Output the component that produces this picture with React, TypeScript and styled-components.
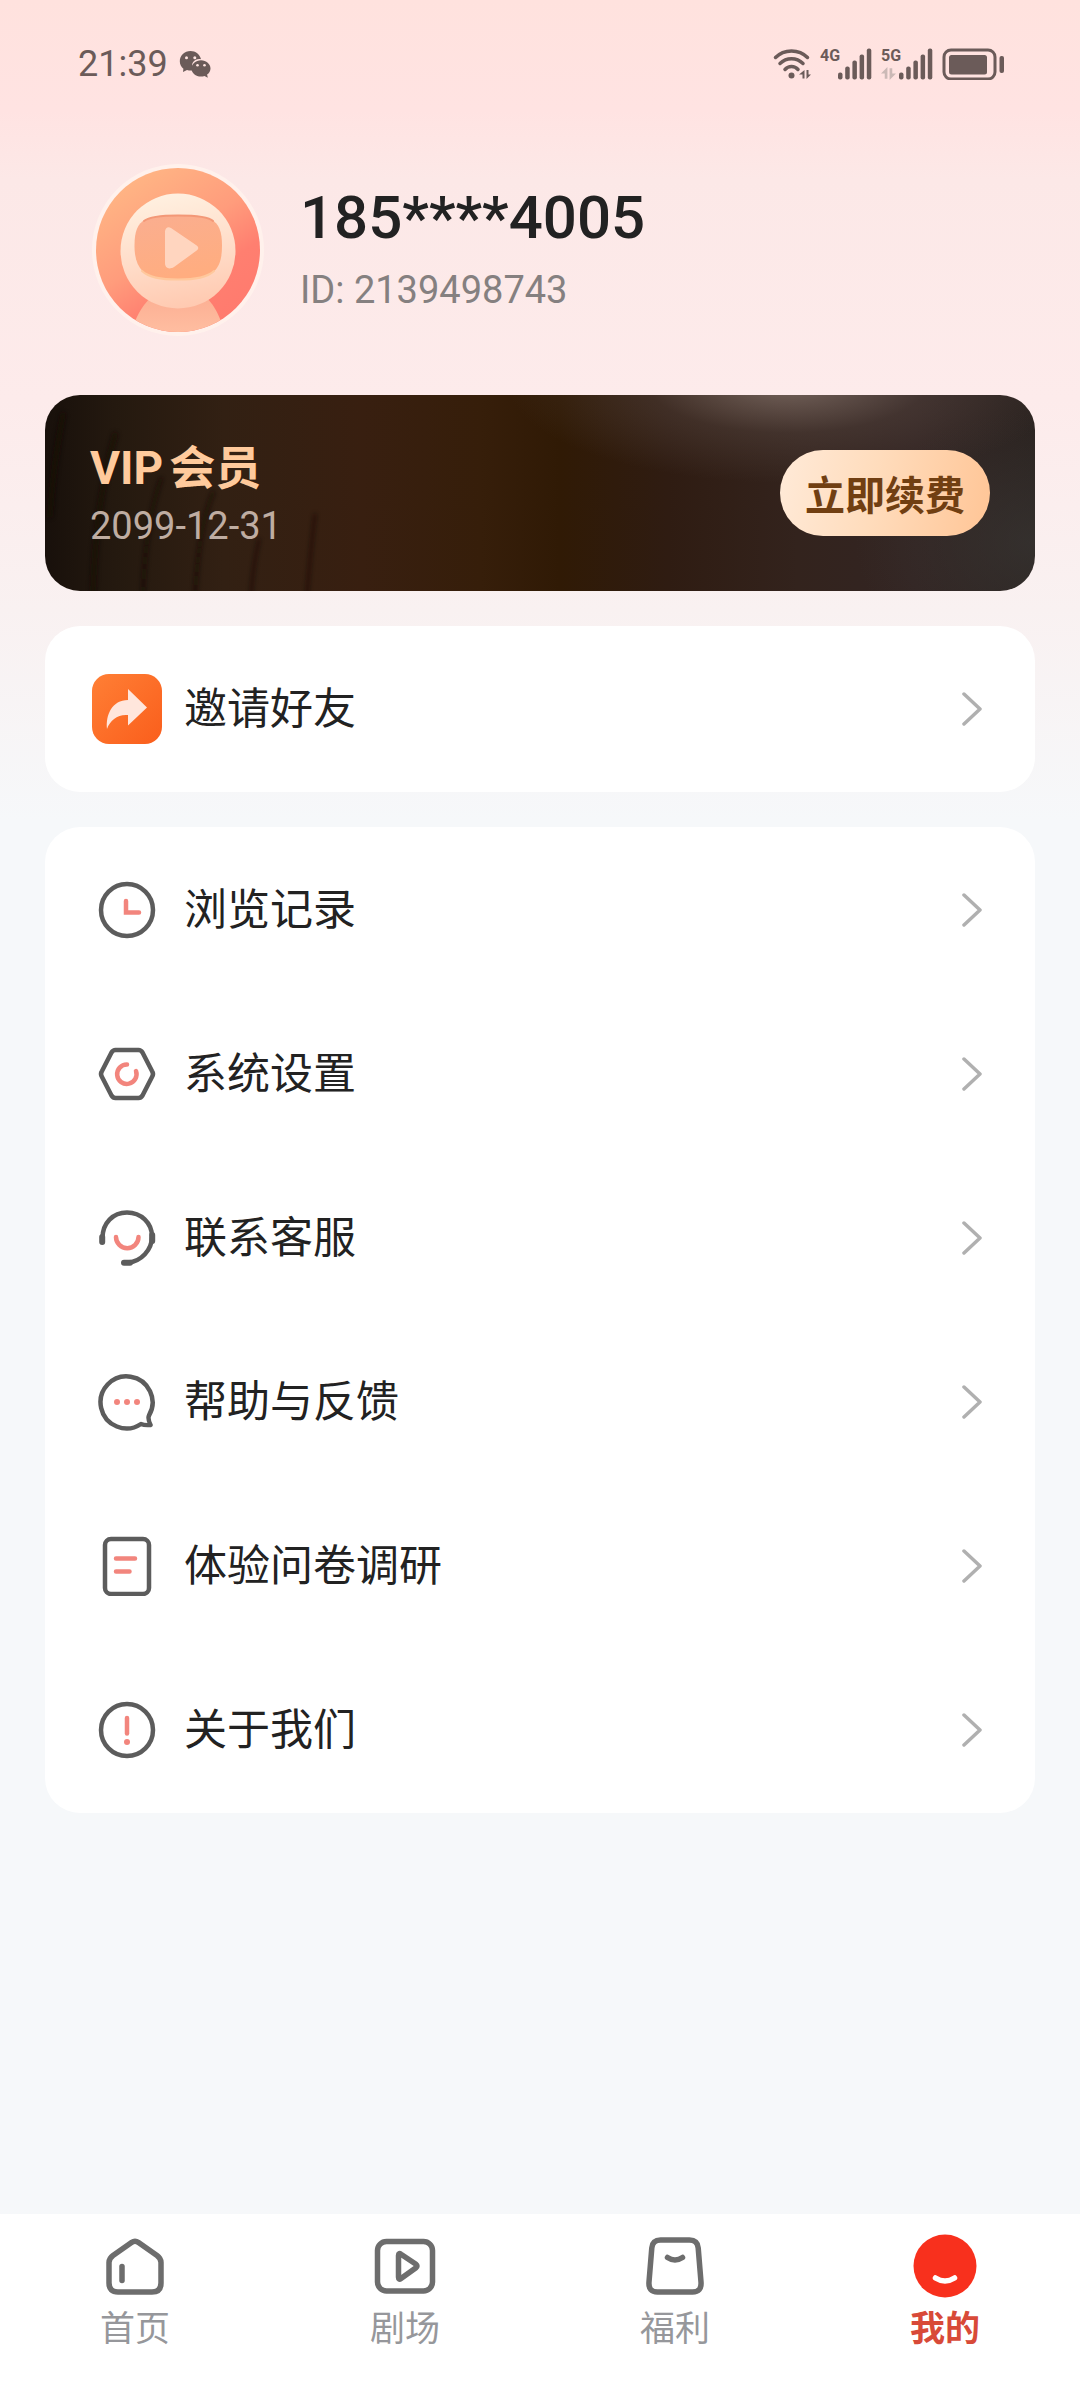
import React from "react";
import styled, { createGlobalStyle } from "styled-components";

const INK = "#5c5c5c";
const CORAL = "#f2857d";
const STATUS = "#6b5b59";
const TAB = "#6d6d6d";

const GlobalStyle = createGlobalStyle`
  *, *::before, *::after { box-sizing: border-box; }
  body {
    margin: 0;
    font-family: Roboto, "Noto Sans CJK SC", sans-serif;
    color: #222;
    background: #f6f8fa;
  }
  svg { display: block; flex: none; }
  a { color: inherit; text-decoration: none; }
`;

const Page = styled.div`
  min-height: 100vh;
  display: flex;
  flex-direction: column;
  background: linear-gradient(
    180deg,
    #ffe2de 0,
    #ffe3e2 110px,
    #fce8e7 180px,
    #fdebeb 400px,
    #f9f1f1 610px,
    #f6f8fa 820px
  );
`;

const StatusBar = styled.header`
  display: flex;
  align-items: center;
  justify-content: space-between;
  height: 128px;
  padding: 0 76px 0 78px;
  color: ${STATUS};
`;

const StatusGroup = styled.div<{ $gap: number }>`
  display: flex;
  align-items: center;
  gap: ${(p) => p.$gap}px;
`;

const Clock = styled.time`
  font-size: 36px;
  line-height: 40px;
`;

const Signal = styled.div`
  display: flex;
  height: 32px;
`;

const SignalSide = styled.div`
  display: flex;
  flex-direction: column;
  justify-content: space-between;
  align-items: flex-start;
  width: 18px;
`;

const SignalLabel = styled.span`
  font-family: "Liberation Sans Narrow", Roboto, sans-serif;
  font-size: 16px;
  font-weight: 700;
  line-height: 16px;
`;

const Content = styled.main`
  flex: 1;
  display: flex;
  flex-direction: column;
  gap: 35px;
  padding: 0 45px 60px;
`;

const Profile = styled.section`
  display: flex;
  align-items: center;
  gap: 36px;
  padding: 36px 47px 24px;
`;

const PhoneNumber = styled.h1`
  margin: 0;
  font-size: 60px;
  font-weight: 500;
  line-height: 80px;
`;

const UserId = styled.p`
  margin: 0;
  font-size: 38px;
  line-height: 64px;
  color: #858080;
`;

const VipCard = styled.section`
  position: relative;
  display: flex;
  align-items: center;
  justify-content: space-between;
  height: 196px;
  padding: 0 45px;
  overflow: hidden;
  border-radius: 35px;
  background:
    radial-gradient(ellipse 280px 100px at 75% -12px, rgba(140, 122, 114, 0.75), rgba(90, 74, 68, 0.4) 50%, transparent),
    radial-gradient(ellipse 180px 130px at 100% 75%, rgba(58, 56, 54, 0.6), transparent),
    linear-gradient(90deg, #18100b 0, #24190f 7%, #322013 18%, #381f10 32%, #361e0a 44%, #301a05 52%, #2f1c12 63%, #33231d 76%, #332523 88%, #2b2320 100%);
`;

const Strands = styled.svg`
  position: absolute;
  left: 0;
  top: 0;
`;

const VipText = styled.div`
  position: relative;
  padding-top: 6px;
`;

const VipTitle = styled.h2`
  display: flex;
  gap: 6px;
  margin: 0;
  font-size: 46px;
  font-weight: 700;
  line-height: 60px;
  color: #ffca9c;
`;

const VipDate = styled.p`
  margin: 0;
  font-size: 38px;
  line-height: 56px;
  color: #bfada2;
`;

const RenewButton = styled.button`
  position: relative;
  width: 210px;
  height: 86px;
  padding: 0;
  border: 0;
  border-radius: 43px;
  font: inherit;
  font-size: 40px;
  font-weight: 700;
  color: #713f12;
  background: linear-gradient(100deg, #ffead8 0, #ffdcbc 45%, #ffc596 100%);
  cursor: pointer;
`;

const Card = styled.nav`
  padding: 1px 0;
  border-radius: 35px;
  background: #fff;
`;

const Row = styled.a`
  display: flex;
  align-items: center;
  gap: 22px;
  height: 164px;
  padding: 0 53px 0 47px;
`;

const IconSlot = styled.span`
  display: flex;
  justify-content: center;
  width: 70px;
`;

const RowLabel = styled.span`
  flex: 1;
  font-size: 43px;
  line-height: 60px;
`;

const TabBar = styled.nav`
  display: grid;
  grid-template-columns: repeat(4, 1fr);
  height: 174px;
  padding-top: 20px;
  background: #fff;
`;

const Tab = styled.a<{ $active: boolean }>`
  display: flex;
  flex-direction: column;
  align-items: center;
  gap: 8px;
  font-size: 35px;
  font-weight: ${(p) => (p.$active ? 700 : 400)};
  line-height: 48px;
  color: ${(p) => (p.$active ? "#d84a38" : "#96979b")};
`;

const WechatIcon = () => (
  <svg width="32" height="28" viewBox="0 0 32 28" fill={STATUS}>
    <path d="M11.500 1C5.500 1 .8 5.600 .8 11.200c0 3.200 1.400 5.800 3.600 7.500L4 22l4-2c2 .6 4.500.8 6 .3C10.500 12 17 8 22 9.200 21 4.500 16.500 1 11.500 1Z" />
    <path d="M22 10.200c-5.300 0-9.500 3.700-9.500 8.200s4.200 8.200 9.500 8.200c1.200 0 2.400-.2 3.500-.6l3.300 1.800-.7-3.200c2-1.500 3.400-3.700 3.400-6.200 0-4.500-4.200-8.200-9.500-8.200Z" />
    <g fill="#ffe5e2">
      <circle cx="7.500" cy="7.800" r="1.500" />
      <circle cx="15.800" cy="7.800" r="1.500" />
      <circle cx="18.500" cy="15.200" r="1.300" />
      <circle cx="25.500" cy="15.200" r="1.300" />
    </g>
  </svg>
);

const DataArrows = ({ faded = false }: { faded?: boolean }) => (
  <svg width="15" height="13" viewBox="0 0 14 12" fill={faded ? "#cbb9b6" : STATUS}>
    <path d="M6 0v11H3.500V6H0ZM8 1h2.500v5H14L8 12Z" />
  </svg>
);

const WifiIcon = () => (
  <svg width="38" height="32" viewBox="0 0 38 32" fill="none" stroke={STATUS} strokeWidth="3.500" strokeLinecap="round">
    <path d="M2.500 9.500C11 .7 26 .7 34.500 9.500M7 15.500c6.500-6.500 16.500-6.500 23 0M12 21.500c3.500-4 9.500-4 13 0" />
    <circle cx="18.500" cy="27.500" r="3" fill={STATUS} stroke="none" />
    <path d="M31.500 22v8.500h-2v-4H26ZM33.500 22v9l4.500-4.500h-2.500V22Z" fill={STATUS} stroke="none" />
  </svg>
);

const BARS = [7, 13, 19, 25, 31];

const SignalBars = () => (
  <svg width="34" height="32" viewBox="0 0 34 32" fill={STATUS}>
    {BARS.map((h, i) => (
      <rect key={h} x={i * 7.2} y={31.5 - h} width="4.500" height={h} rx="2" />
    ))}
  </svg>
);

const BatteryIcon = () => (
  <svg width="62" height="32" viewBox="0 0 62 32" fill={STATUS}>
    <rect x="2" y="2" width="51" height="29" rx="7" fill="none" stroke={STATUS} strokeWidth="3" />
    <rect x="7" y="7" width="38" height="19.500" rx="2.500" />
    <rect x="57.500" y="8" width="4.500" height="17" rx="2" />
  </svg>
);

const Avatar = () => (
  <svg width="172" height="172" viewBox="0 0 172 172" role="img" aria-label="头像">
    <defs>
      <linearGradient id="avBg" x1="0.200" y1="0.050" x2="0.800" y2="0.950">
        <stop offset="0" stopColor="#ffb785" />
        <stop offset="0.450" stopColor="#ff9c7c" />
        <stop offset="0.700" stopColor="#ff7f70" />
        <stop offset="1" stopColor="#ff7a6e" />
      </linearGradient>
      <linearGradient id="avHelmet" x1="0.400" y1="0" x2="0.600" y2="1">
        <stop offset="0" stopColor="#fff0e0" />
        <stop offset="0.550" stopColor="#ffdcc8" />
        <stop offset="1" stopColor="#ffc9b0" />
      </linearGradient>
      <linearGradient id="avVisor" x1="0" y1="0" x2="0.300" y2="1">
        <stop offset="0" stopColor="#faae90" />
        <stop offset="1" stopColor="#ffad80" />
      </linearGradient>
      <linearGradient id="avBody" x1="0" y1="0" x2="0" y2="1">
        <stop offset="0" stopColor="#fcb094" />
        <stop offset="1" stopColor="#ffbfa2" />
      </linearGradient>
      <clipPath id="avClip">
        <circle cx="86" cy="86" r="82" />
      </clipPath>
    </defs>
    <circle cx="86" cy="86" r="86" fill="#fff1ec" />
    <g clipPath="url(#avClip)">
      <rect width="172" height="172" fill="url(#avBg)" />
      <path d="M57 135C51 142 46 149 42 160v12h88v-12c-4-11-8-18-14-25Z" fill="url(#avBody)" />
      <circle cx="86" cy="87" r="57.500" fill="url(#avHelmet)" />
      <path
        d="M86 51.500c15 0 26 .5 33 4 8 4 11 12 11 26 0 12-2 20-8 26-7 6-18 8-36 8s-29-2-35-8c-6-6-8.500-14-8.500-26 0-14 3-22 11-26 7-3.500 17.500-4 32.500-4Z"
        fill="url(#avVisor)"
      />
      <path d="M52 57c5-4 14-5.500 34-5.500s31 1.500 35 5.500" fill="none" stroke="#f39877" strokeWidth="2" strokeLinecap="round" />
      <path d="M50 107c7 6.500 18 8.500 36 8.500s29-2 36-8.500" fill="none" stroke="#ffc89c" strokeWidth="2" strokeLinecap="round" />
      <path d="M73 68c0-4 3-6 6-4l25 17c3 2 3 4 0 6l-22 16c-5 3-9 1-9-4Z" fill="#ffd5bf" />
    </g>
  </svg>
);

const ShareIcon = () => (
  <svg width="70" height="70" viewBox="0 0 70 70">
    <defs>
      <linearGradient id="shareBg" x1="0" y1="0" x2="1" y2="1">
        <stop offset="0" stopColor="#ff7f35" />
        <stop offset="1" stopColor="#fa5e1c" />
      </linearGradient>
    </defs>
    <rect width="70" height="70" rx="17" fill="url(#shareBg)" />
    <path d="M36 15 55 33.500 36 51.500V41C26 40 18 46 15 55c-1.500-14 5-29 21-29Z" fill="#ffe6dc" />
  </svg>
);

const lineIcon = {
  width: 60,
  height: 60,
  viewBox: "0 0 60 60",
  fill: "none",
  stroke: INK,
  strokeWidth: 4.5,
  strokeLinecap: "round" as const,
  strokeLinejoin: "round" as const,
};

const HistoryIcon = () => (
  <svg {...lineIcon}>
    <circle cx="30" cy="30" r="26" />
    <path d="M29 21v11.500h13" stroke={CORAL} strokeLinejoin="miter" />
  </svg>
);

const SettingsIcon = () => (
  <svg {...lineIcon}>
    <path d="M18.500 6h23q2.500 0 4 2.500L55 27q2 3 0 6l-9.500 18.500q-1.500 2.500-4 2.500h-23q-2.500 0-4-2.500L5 33q-2-3 0-6l9.500-18.500Q16 6 18.500 6Z" />
    <path d="M30 20.500A9.700 9.700 0 1 0 39 27" stroke={CORAL} />
  </svg>
);

const ServiceIcon = () => (
  <svg {...lineIcon}>
    <path d="M5.500 30C5.500 15 16 4.500 30 4.500S55 15 55 28.500 44 53.500 31 54.500" />
    <path d="M5.200 29v5M55.200 27v6M27 54.800h6" strokeWidth="6" />
    <path d="M19 29a11.200 11.200 0 0 0 22.500 0" stroke={CORAL} />
  </svg>
);

const FeedbackIcon = () => (
  <svg {...lineIcon}>
    <path d="M44 52A26 26 0 1 1 52 43.500q-1.500 3 1.500 9.500-6 .5-9.500-1Z" />
    <g fill={CORAL} stroke="none">
      <circle cx="20" cy="30" r="3" />
      <circle cx="30" cy="30" r="3" />
      <circle cx="40" cy="30" r="3" />
    </g>
  </svg>
);

const SurveyIcon = () => (
  <svg {...lineIcon}>
    <rect x="8" y="3" width="44" height="55" rx="6" />
    <path d="M19 22.500h19M19 35.500h13.500" stroke={CORAL} />
  </svg>
);

const AboutIcon = () => (
  <svg {...lineIcon}>
    <circle cx="30" cy="30" r="26" />
    <path d="M30 18v15.500" stroke={CORAL} />
    <circle cx="30" cy="42" r="3" fill={CORAL} stroke="none" />
  </svg>
);

const Chevron = () => (
  <svg width="20" height="34" viewBox="0 0 20 34" fill="none" stroke="#b0b0b0" strokeWidth="3.500" strokeLinecap="round" strokeLinejoin="round">
    <path d="M2 2 18 17 2 32" />
  </svg>
);

const tabIcon = {
  width: 64,
  height: 64,
  viewBox: "0 0 64 64",
  fill: "none",
  stroke: TAB,
  strokeWidth: 5.5,
  strokeLinecap: "round" as const,
  strokeLinejoin: "round" as const,
};

const HomeIcon = () => (
  <svg {...tabIcon}>
    <path d="M28.500 8.500q3.500-2.500 7 0L54 21.500q4 3 4 7V49q0 9-9 9H15q-9 0-9-9V28.500q0-4 4-7Z" />
    <path d="M19 32.500v14" />
  </svg>
);

const TheaterIcon = () => (
  <svg {...tabIcon}>
    <rect x="4.500" y="7.500" width="55" height="49.500" rx="9" />
    <path d="M25.500 21.500q0-3 2.500-1.200l15 10q2 1.700 0 3.400L28 44.500q-2.500 1.800-2.500-1.200Z" />
  </svg>
);

const WelfareIcon = () => (
  <svg {...tabIcon}>
    <path d="M17.500 6h29q8 0 8.700 8L58 48q.8 10-8.500 10h-35Q5.200 58 6 48l2.800-34q.7-8 8.700-8Z" />
    <path d="M24.500 23.500q7.500 5 15 0" />
  </svg>
);

const MineIcon = () => (
  <svg {...tabIcon}>
    <circle cx="32" cy="32" r="31.500" fill="#f8301d" stroke="none" />
    <path d="M22.500 44q9.500 6 19 0" stroke="#fff" />
  </svg>
);

const MENU = [
  { label: "浏览记录", Icon: HistoryIcon },
  { label: "系统设置", Icon: SettingsIcon },
  { label: "联系客服", Icon: ServiceIcon },
  { label: "帮助与反馈", Icon: FeedbackIcon },
  { label: "体验问卷调研", Icon: SurveyIcon },
  { label: "关于我们", Icon: AboutIcon },
];

const TABS = [
  { label: "首页", Icon: HomeIcon },
  { label: "剧场", Icon: TheaterIcon },
  { label: "福利", Icon: WelfareIcon },
  { label: "我的", Icon: MineIcon, active: true },
];

const MenuRow = ({ label, Icon }: { label: string; Icon: React.FC }) => (
  <Row href="#">
    <IconSlot>
      <Icon />
    </IconSlot>
    <RowLabel>{label}</RowLabel>
    <Chevron />
  </Row>
);

export default function App() {
  return (
    <>
      <GlobalStyle />
      <Page>
        <StatusBar>
          <StatusGroup $gap={11}>
            <Clock>21:39</Clock>
            <WechatIcon />
          </StatusGroup>
          <StatusGroup $gap={9}>
            <WifiIcon />
            <Signal>
              <SignalSide>
                <SignalLabel>4G</SignalLabel>
              </SignalSide>
              <SignalBars />
            </Signal>
            <Signal>
              <SignalSide>
                <SignalLabel>5G</SignalLabel>
                <DataArrows faded />
              </SignalSide>
              <SignalBars />
            </Signal>
            <BatteryIcon />
          </StatusGroup>
        </StatusBar>
        <Content>
          <Profile>
            <Avatar />
            <div>
              <PhoneNumber>185****4005</PhoneNumber>
              <UserId>ID: 2139498743</UserId>
            </div>
          </Profile>
          <VipCard>
            <Strands width="330" height="196" viewBox="0 0 330 196" fill="none" stroke="#150a05" strokeLinecap="round" aria-hidden="true">
              <defs>
                <filter id="soft" x="-20%" y="-20%" width="140%" height="140%">
                  <feGaussianBlur stdDeviation="2" />
                </filter>
              </defs>
              <g filter="url(#soft)" opacity="0.600">
                <path d="M5 120Q8 70 18 20M48 200Q50 110 70 40" strokeWidth="6" />
                <path d="M98 200Q100 130 116 84M150 200Q154 130 168 98" strokeWidth="4" />
                <path d="M206 200Q208 170 214 145M262 200Q266 150 270 120" strokeWidth="3" />
              </g>
            </Strands>
            <VipText>
              <VipTitle>
                <span>VIP</span>
                <span>会员</span>
              </VipTitle>
              <VipDate>2099-12-31</VipDate>
            </VipText>
            <RenewButton type="button">立即续费</RenewButton>
          </VipCard>
          <Card aria-label="邀请">
            <MenuRow label="邀请好友" Icon={ShareIcon} />
          </Card>
          <Card aria-label="菜单">
            {MENU.map((item) => (
              <MenuRow key={item.label} {...item} />
            ))}
          </Card>
        </Content>
        <TabBar aria-label="主导航">
          {TABS.map(({ label, Icon, active = false }) => (
            <Tab key={label} href="#" $active={active} aria-current={active ? "page" : undefined}>
              <Icon />
              {label}
            </Tab>
          ))}
        </TabBar>
      </Page>
    </>
  );
}
